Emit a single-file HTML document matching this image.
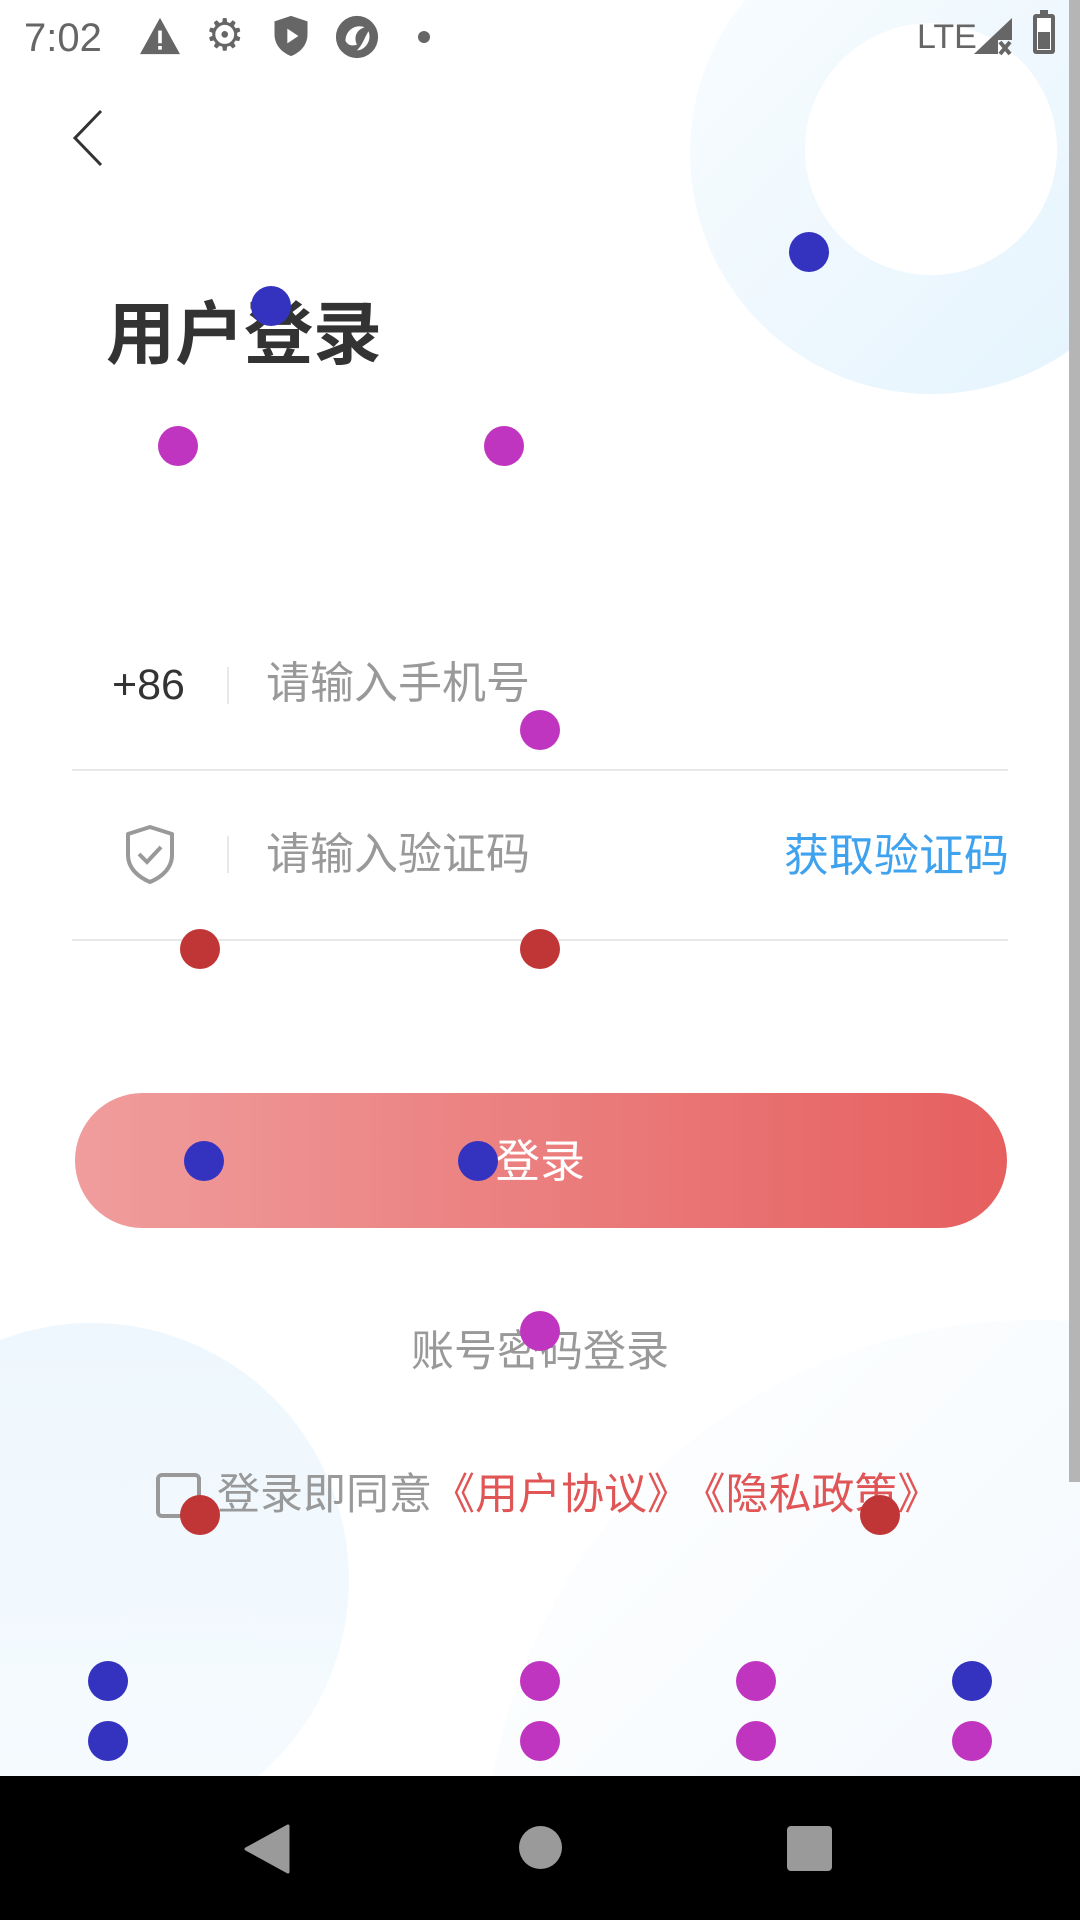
<!DOCTYPE html>
<html><head><meta charset="utf-8"><style>
*{margin:0;padding:0;box-sizing:border-box}
html,body{width:1080px;height:1920px;overflow:hidden;background:#fff}
body{font-family:"Liberation Sans","Noto Sans CJK SC",sans-serif}
#w{position:relative;width:1080px;height:1920px;overflow:hidden;background:#fff}
.a{position:absolute}
.dot{position:absolute;width:40px;height:40px;border-radius:50%;margin:-20px 0 0 -20px}
.b{background:#3333bf}.m{background:#c035c0}.r{background:#c03535}
.t{position:absolute;white-space:nowrap;line-height:1}
</style></head><body><div id="w">
<div class="a" style="left:690px;top:-88px;width:482px;height:482px;border-radius:50%;background:linear-gradient(135deg,#fafdff,#e3f3fd)"></div>
<div class="a" style="left:805px;top:23px;width:252px;height:252px;border-radius:50%;background:#fff"></div>
<div class="a" style="left:-165px;top:1323px;width:514px;height:514px;border-radius:50%;background:linear-gradient(180deg,#eef7fd,#f6fbff)"></div>
<div class="a" style="left:485px;top:1320px;width:1100px;height:1100px;border-radius:50%;background:linear-gradient(135deg,#ffffff,#e8f3fc)"></div>
<div class="a" style="left:1069px;top:0;width:11px;height:1482px;background:#b5b5b5"></div>
<div class="t" style="left:24px;top:18px;font-size:40px;color:#666">7:02</div>
<svg class="a" style="left:138px;top:16px" width="44" height="40" viewBox="0 0 24 22"><path d="M12 1L23 21H1Z" fill="#666"/><rect x="11" y="8" width="2" height="7" fill="#fff"/><rect x="11" y="16.5" width="2" height="2" fill="#fff"/></svg>
<div class="t" style="left:205px;top:14px;font-size:44px;color:#666">⚙</div>
<svg class="a" style="left:272px;top:14px" width="38" height="44" viewBox="0 0 20 24"><path d="M10 1L19 4V11C19 17 15 21 10 23C5 21 1 17 1 11V4Z" fill="#666"/><path d="M8 8L14 12L8 16Z" fill="#fff"/></svg>
<svg class="a" style="left:334px;top:14px" width="46" height="46" viewBox="0 0 24 24"><circle cx="12" cy="12" r="11" fill="#666"/><path d="M6 14C6 8 12 5 16 7C12 8 10 12 12 16C9 17 7 16 6 14Z" fill="#fff"/><path d="M18 9C20 14 16 19 12 19C15 16 16 12 18 9Z" fill="#fff"/></svg>
<div class="a" style="left:418px;top:31px;width:12px;height:12px;border-radius:50%;background:#666"></div>
<div class="t" style="left:917px;top:20px;font-size:34px;color:#666">LTE</div>
<svg class="a" style="left:972px;top:16px" width="42" height="40" viewBox="0 0 21 20"><path d="M20 1V12H13V19H1Z" fill="#666"/><path d="M14 13L19 19M19 13L14 19" stroke="#666" stroke-width="2"/></svg>
<div class="a" style="left:1033px;top:14px;width:22px;height:40px;border:4px solid #666;border-radius:3px;background:#fff"></div>
<div class="a" style="left:1038px;top:32px;width:12px;height:17px;background:#666"></div>
<div class="a" style="left:1040px;top:10px;width:8px;height:5px;background:#666"></div>
<svg class="a" style="left:70px;top:108px" width="40" height="60" viewBox="0 0 40 60"><path d="M31 3L5 30L31 57" stroke="#333" stroke-width="3" fill="none"/></svg>
<div class="t" style="left:106px;top:300px;font-size:69px;font-weight:bold;color:#333">用户登录</div>
<div class="t" style="left:112px;top:664px;font-size:43px;color:#333">+86</div>
<div class="a" style="left:227px;top:667px;width:2px;height:37px;background:#e8e8e8"></div>
<div class="t" style="left:266px;top:662px;font-size:44px;color:#999">请输入手机号</div>
<div class="a" style="left:72px;top:769px;width:936px;height:2px;background:#e8e8e8"></div>
<svg class="a" style="left:124px;top:824px" width="52" height="62" viewBox="0 0 52 62"><path d="M26 3L48 10V31C48 44 38 53 26 58C14 53 4 44 4 31V10Z" stroke="#999" stroke-width="4" fill="none" stroke-linejoin="round"/><path d="M15 30L23 38L37 23" stroke="#999" stroke-width="4" fill="none"/></svg>
<div class="a" style="left:227px;top:836px;width:2px;height:37px;background:#e8e8e8"></div>
<div class="t" style="left:266px;top:833px;font-size:44px;color:#999">请输入验证码</div>
<div class="t" style="left:784px;top:833px;font-size:45px;color:#3fa2ee">获取验证码</div>
<div class="a" style="left:72px;top:939px;width:936px;height:2px;background:#e8e8e8"></div>
<div class="a" style="left:75px;top:1093px;width:932px;height:135px;border-radius:68px;background:linear-gradient(90deg,#f09d9d,#e65f5f)"></div>
<div class="t" style="left:0;width:1080px;text-align:center;top:1139px;font-size:45px;color:#fff">登录</div>
<div class="t" style="left:0;width:1080px;text-align:center;top:1331px;font-size:43px;color:#999">账号密码登录</div>
<div class="a" style="left:156px;top:1473px;width:45px;height:45px;border:4px solid #999;border-radius:6px"></div>
<div class="t" style="left:217px;top:1474px;font-size:43px;color:#999">登录即同意<span style="color:#e05555">《用户协议》</span><span style="color:#e05555;margin-left:14px">《隐私政策》</span></div>
<div class="dot b" style="left:809px;top:252px"></div>
<div class="dot b" style="left:271px;top:306px"></div>
<div class="dot m" style="left:178px;top:446px"></div>
<div class="dot m" style="left:504px;top:446px"></div>
<div class="dot m" style="left:540px;top:730px"></div>
<div class="dot r" style="left:200px;top:949px"></div>
<div class="dot r" style="left:540px;top:949px"></div>
<div class="dot b" style="left:204px;top:1161px"></div>
<div class="dot b" style="left:478px;top:1161px"></div>
<div class="dot m" style="left:540px;top:1331px"></div>
<div class="dot r" style="left:200px;top:1515px"></div>
<div class="dot r" style="left:880px;top:1515px"></div>
<div class="dot b" style="left:108px;top:1681px"></div>
<div class="dot m" style="left:540px;top:1681px"></div>
<div class="dot m" style="left:756px;top:1681px"></div>
<div class="dot b" style="left:972px;top:1681px"></div>
<div class="dot b" style="left:108px;top:1741px"></div>
<div class="dot m" style="left:540px;top:1741px"></div>
<div class="dot m" style="left:756px;top:1741px"></div>
<div class="dot m" style="left:972px;top:1741px"></div>
<div class="a" style="left:0;top:1776px;width:1080px;height:144px;background:#000"></div>
<svg class="a" style="left:244px;top:1824px" width="46" height="50" viewBox="0 0 46 50"><path d="M44 2V48L2 25Z" fill="#9a9a9a" stroke="#9a9a9a" stroke-width="3" stroke-linejoin="round"/></svg>
<div class="a" style="left:519px;top:1826px;width:43px;height:43px;border-radius:50%;background:#9a9a9a"></div>
<div class="a" style="left:787px;top:1826px;width:45px;height:45px;border-radius:4px;background:#9a9a9a"></div>
</div></body></html>
